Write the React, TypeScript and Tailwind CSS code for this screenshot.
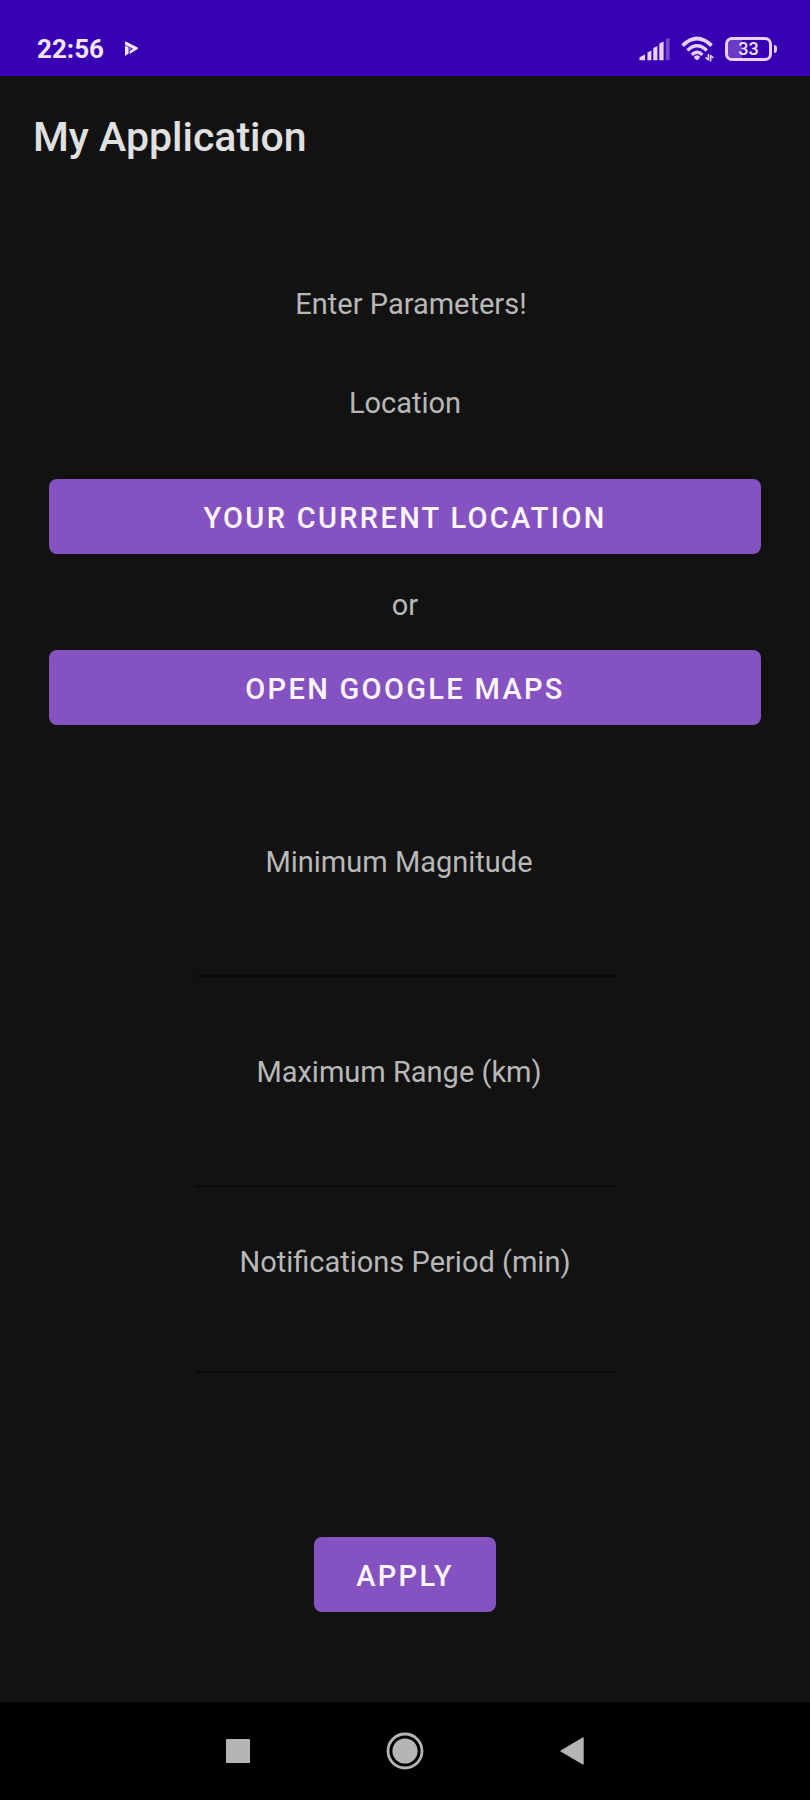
import type { ReactNode } from "react";

function StatusBar() {
  return (
    <div className="flex h-[76px] items-center justify-between bg-[#3700b3] pl-[37px] pr-[33px] pt-[22px] text-[#f6e4ff]">
      <div className="flex items-center gap-5">
        <time className="text-[26px] leading-8 font-bold">22:56</time>
        <svg width="15" height="16" viewBox="0 0 15 16" aria-hidden="true">
          <path d="M1 4.6 4.6 6.2V12.6L1 15Z" fill="#f6e4ff" />
          <path d="M1 0.8H2.4L13.6 6.4Q14.6 7.4 13.4 8.2L10.4 8.4 1 3.8Z" fill="#f6e4ff" />
          <path d="M13.6 8 5.6 13V10L9.4 7.8Z" fill="#f6e4ff" />
          <path d="M5.4 6.8 8 8 5.4 9.2Z" fill="#9a76d8" />
        </svg>
      </div>
      <div className="flex items-center gap-[11px]">
        <svg width="31" height="24" viewBox="0 0 31 24" fill="#e9cffc" aria-hidden="true">
          <path d="M0.5 20.2 6 17.6v5.6H0.5Z" />
          <path d="M8.5 15.4 12.4 13.4V23.2H8.5Z" />
          <path d="M14.3 11 18.4 9V23.2H14.3Z" />
          <path d="M20.3 6.6 24.6 4.4V23.2H20.3Z" />
          <path d="M26.8 2.6 30.6 0.6V23.2H26.8Z" opacity="0.35" />
        </svg>
        <svg width="33" height="26" viewBox="0 0 33 26" fill="none" stroke="#e9cffc" aria-hidden="true">
          <path d="M1.6 9.6Q16-4.6 30.6 9.6" strokeWidth="3.6" />
          <path d="M6.4 14.4Q16 5 25.8 14.4" strokeWidth="3.4" />
          <path d="M10.8 18.8Q16 13.6 21.4 18.8" strokeWidth="3.2" />
          <path d="M12.8 20.8Q16 17.8 19.2 20.8 18.4 23.6 16 24.2 13.6 23.6 12.8 20.8Z" fill="#e9cffc" stroke="none" />
          <path d="M27.4 18V24.5M24.4 21.4 27.4 24M29.6 25.5V19M29.6 19.6 32.4 22" strokeWidth="1.6" />
        </svg>
        <div className="flex items-center gap-0.5" role="img" aria-label="Battery 33 percent">
          <div className="flex h-6 w-[47px] items-center justify-center rounded-[7px] border-[3px] border-[#e9cffc] bg-linear-to-r from-[#6a3cc6] from-35% to-transparent to-35% text-[18px] leading-[18px] font-medium">
            33
          </div>
          <div className="h-2 w-[3px] rounded-r-sm bg-[#e9cffc]" />
        </div>
      </div>
    </div>
  );
}

function Button({ children, className }: { children: ReactNode; className: string }) {
  return (
    <button
      type="button"
      className={`h-[75px] rounded-lg bg-[#8453c1] pt-0.5 text-[29px] leading-10 font-medium tracking-[0.08em] text-[#fff5ff] uppercase ${className}`}
    >
      {children}
    </button>
  );
}

interface FieldProps {
  id: string;
  label: string;
  className: string;
  labelClassName?: string;
}

function Field({ id, label, className, labelClassName = "" }: FieldProps) {
  return (
    <div className={`flex flex-col items-center justify-between ${className}`}>
      <label htmlFor={id} className={labelClassName}>
        {label}
      </label>
      <input
        id={id}
        type="text"
        inputMode="decimal"
        className="h-[60px] w-[59%] border-b-2 border-[#0a0a0a] bg-transparent text-center outline-none"
      />
    </div>
  );
}

export default function App() {
  return (
    <div className="flex min-h-screen flex-col bg-[#121212] font-[Roboto,sans-serif]">
      <StatusBar />
      <header className="flex h-[122px] items-center px-[33px]">
        <h1 className="text-[41px] leading-[48px] font-medium text-[#e0e0e0]">My Application</h1>
      </header>
      <main className="flex flex-1 flex-col px-[49px] pt-[86px] text-[29px] leading-10 text-[#b8b8b8]">
        <h2 className="pl-3 text-center">Enter Parameters!</h2>
        <h3 className="mt-[59px] text-center">Location</h3>
        <Button className="mt-14 w-full">Your current location</Button>
        <p className="mt-[31px] text-center">or</p>
        <Button className="mt-[25px] w-full">Open Google Maps</Button>

        <Field id="magnitude" label="Minimum Magnitude" className="mt-[117px] h-[135px]" labelClassName="pr-3" />
        <Field id="range" label="Maximum Range (km)" className="mt-[75px] h-[135px]" labelClassName="pr-3" />
        <Field id="period" label="Notifications Period (min)" className="mt-[55px] h-[131px]" />

        <Button className="mt-[164px] mb-[90px] self-center px-[42px]">Apply</Button>
      </main>
      <nav className="flex h-[98px] justify-center bg-black" aria-label="System navigation">
        <div className="grid w-[500px] grid-cols-3">
          <button type="button" aria-label="Recent apps" className="flex items-center justify-center">
            <span className="size-6 rounded-[1px] bg-[#b5b5b5]" />
          </button>
          <button type="button" aria-label="Home" className="flex items-center justify-center">
            <svg width="38" height="38" viewBox="0 0 38 38" aria-hidden="true">
              <circle cx="19" cy="19" r="17" fill="none" stroke="#b5b5b5" strokeWidth="2.8" />
              <circle cx="19" cy="19" r="12.6" fill="#b5b5b5" />
            </svg>
          </button>
          <button type="button" aria-label="Back" className="flex items-center justify-center">
            <svg width="24" height="28" viewBox="0 0 24 28" aria-hidden="true">
              <path d="M23 1V27L1 14Z" fill="#b5b5b5" stroke="#b5b5b5" strokeWidth="1.4" strokeLinejoin="round" />
            </svg>
          </button>
        </div>
      </nav>
    </div>
  );
}
